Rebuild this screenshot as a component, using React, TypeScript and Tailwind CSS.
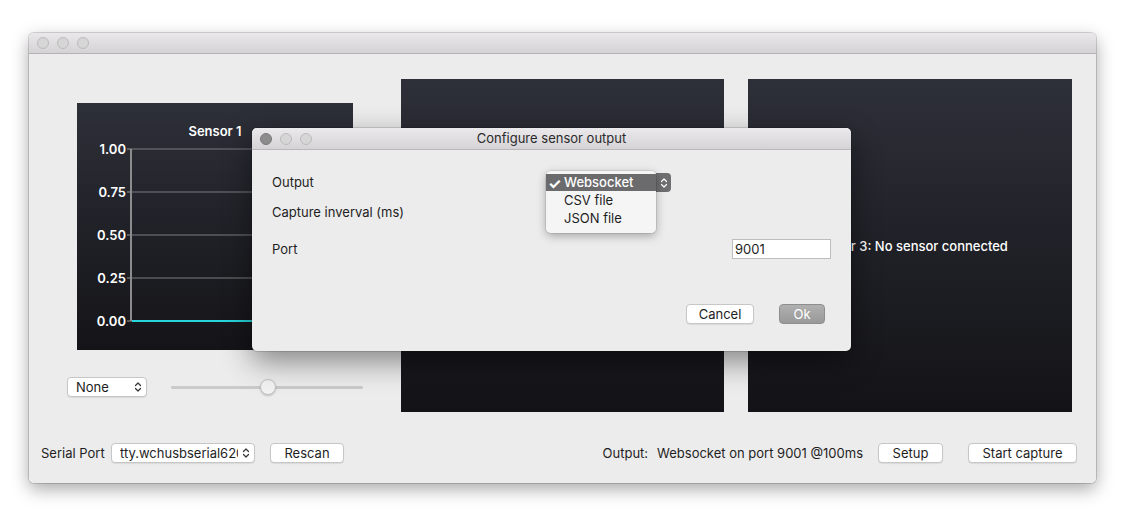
import React from 'react';

const font = { fontFamily: 'Inter, "Liberation Sans", sans-serif' };

function Lights({ active = false }: { active?: boolean }) {
  return (
    <div className="flex items-center gap-[8px]">
      <span className={`h-[12px] w-[12px] rounded-full border ${active ? 'border-[#7a7a7a] bg-[#8c8c8c]' : 'border-[#bcbcbc] bg-[#d6d6d6]'}`} />
      <span className="h-[12px] w-[12px] rounded-full border border-[#bcbcbc] bg-[#d6d6d6]" />
      <span className="h-[12px] w-[12px] rounded-full border border-[#bcbcbc] bg-[#d6d6d6]" />
    </div>
  );
}

function Updown({ color = '#333' }: { color?: string }) {
  return (
    <svg width="8" height="12" viewBox="0 0 8 12" fill="none" stroke={color} strokeWidth="1.2" strokeLinecap="round" strokeLinejoin="round">
      <path d="M1.5 4.5 L4 2 L6.5 4.5" />
      <path d="M1.5 7.5 L4 10 L6.5 7.5" />
    </svg>
  );
}

function Select({ value, width }: { value: string; width: string }) {
  return (
    <div className={`flex h-[20px] ${width} items-center justify-between overflow-hidden rounded-[4px] border border-[#c6c6c6] bg-white pl-[8px] pr-[4px] shadow-[0_1px_1px_rgba(0,0,0,0.08)]`}>
      <span className="min-w-0 flex-1 overflow-hidden whitespace-nowrap pt-px text-[13px] text-[#1e1e1e]">{value}</span>
      <span className="ml-[4px] shrink-0">
        <Updown />
      </span>
    </div>
  );
}

function Button({ label, width, primary = false }: { label: string; width: string; primary?: boolean }) {
  return (
    <div
      className={`flex h-[20px] ${width} items-center justify-center rounded-[4px] pt-px text-[13px] ${
        primary
          ? 'border border-[#8e8e8e] bg-gradient-to-b from-[#b0b0b0] to-[#999999] text-white'
          : 'border border-[#c6c6c6] bg-white text-[#1e1e1e] shadow-[0_1px_1px_rgba(0,0,0,0.08)]'
      }`}
    >
      {label}
    </div>
  );
}

function Chart() {
  const ticks = [
    { l: '1.00', y: 46 },
    { l: '0.75', y: 89 },
    { l: '0.50', y: 132 },
    { l: '0.25', y: 175 },
    { l: '0.00', y: 218 },
  ];
  return (
    <div className="ml-[10px] h-[247px] w-[276px] bg-gradient-to-b from-[#2e3039] to-[#141418]">
      <svg width="276" height="247" viewBox="0 0 276 247">
        <text x="138" y="33" textAnchor="middle" fill="#fff" fontSize="13" fontWeight="600" fontFamily="Inter, sans-serif">
          Sensor 1
        </text>
        {ticks.map((t) => (
          <g key={t.l}>
            <line x1="54" x2="262" y1={t.y} y2={t.y} stroke="#7c7c80" strokeWidth="1" />
            <line x1="50" x2="54" y1={t.y} y2={t.y} stroke="#9a9a9a" strokeWidth="1" />
            <text x="49" y={t.y + 5} textAnchor="end" fill="#fff" fontSize="13" fontWeight="600" fontFamily="Inter, sans-serif">
              {t.l}
            </text>
          </g>
        ))}
        <line x1="54" x2="54" y1="46" y2="218" stroke="#8c8c8c" strokeWidth="2" />
        <line x1="55" x2="262" y1="218" y2="218" stroke="#26d6dc" strokeWidth="2" />
      </svg>
    </div>
  );
}

function Panel({ n, width }: { n: number; width: string }) {
  return (
    <div className={`flex h-[333px] ${width} items-center justify-center bg-gradient-to-b from-[#2e3039] to-[#131317]`}>
      <span className="pt-[2px] text-[13px] font-medium text-white">Sensor {n}: No sensor connected</span>
    </div>
  );
}

function Dialog() {
  return (
    <div className="absolute left-[223px] top-[95px] z-20 flex h-[223px] w-[599px] flex-col rounded-[5px] bg-[#ececec] shadow-[0_10px_30px_rgba(0,0,0,0.45),0_0_0_1px_rgba(0,0,0,0.12)]">
      <div className="relative flex h-[22px] items-center rounded-t-[5px] border-b border-[#b9b9b9] bg-gradient-to-b from-[#ebe9eb] to-[#d5d3d5] pl-[8px]">
        <Lights active />
        <span className="absolute inset-x-0 pt-px text-center text-[13px] text-[#2a2a2a]">Configure sensor output</span>
      </div>
      <div className="flex flex-1 flex-col px-[20px] pt-[22px] text-[13px] text-[#1e1e1e]">
        <div className="flex h-[20px] items-center">
          <span className="w-[274px] pt-[2px]">Output</span>
          <div className="relative h-[20px] w-[125px]">
            <div className="absolute left-[110px] top-[1px] flex h-[19px] w-[15px] items-center justify-center rounded-r-[4px] bg-[#6e6e70]">
              <Updown color="#fff" />
            </div>
            <div className="absolute -top-[1px] left-0 z-10 flex h-[62px] w-[110px] flex-col rounded-[5px] bg-[#f6f6f6]/90 py-[3px] shadow-[0_3px_10px_rgba(0,0,0,0.3),0_0_0_1px_rgba(0,0,0,0.08)]">
              <div className="flex h-[17px] items-center bg-[#6b6b6d] pt-px text-white">
                <span className="w-[18px] pl-[2px] text-[15px] font-bold leading-none">✓</span>
                <span className="font-medium">Websocket</span>
              </div>
              <div className="flex h-[18px] items-center pl-[18px] pt-[2px]">CSV file</div>
              <div className="flex h-[18px] items-center pl-[18px] pt-[2px]">JSON file</div>
            </div>
          </div>
        </div>
        <div className="mt-[10px] flex h-[20px] items-center pt-[2px]">
          <span className="w-[287px]">Capture inverval (ms)</span>
          <span className="text-[#dedede]">100</span>
        </div>
        <div className="mt-[17px] flex h-[20px] items-center justify-between">
          <span className="pt-[2px]">Port</span>
          <div className="flex h-[20px] w-[99px] items-center border border-[#bdbdbd] bg-white pl-[2px] pt-[2px]">9001</div>
        </div>
        <div className="mr-[6px] mt-[45px] flex justify-end gap-[25px]">
          <Button label="Cancel" width="w-[68px]" />
          <Button label="Ok" width="w-[46px]" primary />
        </div>
      </div>
    </div>
  );
}

export default function App() {
  return (
    <div className="h-[522px] w-[1127px] bg-white pl-[29px] pt-[33px]" style={font}>
      <div className="relative flex h-[450px] w-[1067px] flex-col rounded-[5px] shadow-[0_6px_18px_rgba(0,0,0,0.35),0_0_0_1px_rgba(0,0,0,0.15)]">
        <div className="flex h-[21px] items-center rounded-t-[5px] border-b border-[#b4b4b4] bg-gradient-to-b from-[#eae8ea] to-[#d4d2d4] pl-[8px]">
          <Lights />
        </div>
        <div className="flex flex-1 flex-col rounded-b-[5px] bg-[#ececec] pt-[25px]">
          <div className="flex h-[333px] items-start pl-[38px]">
            <div className="flex w-[296px] flex-col pt-[24px]">
              <Chart />
              <div className="mt-[27px] flex items-center">
                <Select value="None" width="w-[80px]" />
                <div className="relative ml-[24px] flex h-[20px] w-[192px] items-center">
                  <div className="h-[3px] w-full rounded-full bg-[#cacaca]" />
                  <div className="absolute left-[89px] top-[2px] h-[16px] w-[16px] rounded-full border border-[#c4c4c4] bg-[#f2f2f2] shadow-[0_1px_2px_rgba(0,0,0,0.2)]" />
                </div>
              </div>
            </div>
            <div className="ml-[38px]">
              <Panel n={2} width="w-[323px]" />
            </div>
            <div className="ml-[24px]">
              <Panel n={3} width="w-[324px]" />
            </div>
          </div>
          <div className="mt-[31px] flex h-[20px] items-center pl-[12px] pr-[19px] text-[13px] text-[#1e1e1e]">
            <span className="w-[70px] pt-[2px]">Serial Port</span>
            <Select value="tty.wchusbserial620" width="w-[144px]" />
            <div className="ml-[15px]">
              <Button label="Rescan" width="w-[74px]" />
            </div>
            <span className="ml-auto pt-[2px]">Output:</span>
            <span className="ml-[9px] pt-[2px]">Websocket on port 9001 @100ms</span>
            <div className="ml-[15px]">
              <Button label="Setup" width="w-[65px]" />
            </div>
            <div className="ml-[25px]">
              <Button label="Start capture" width="w-[109px]" />
            </div>
          </div>
        </div>
        <Dialog />
      </div>
    </div>
  );
}
